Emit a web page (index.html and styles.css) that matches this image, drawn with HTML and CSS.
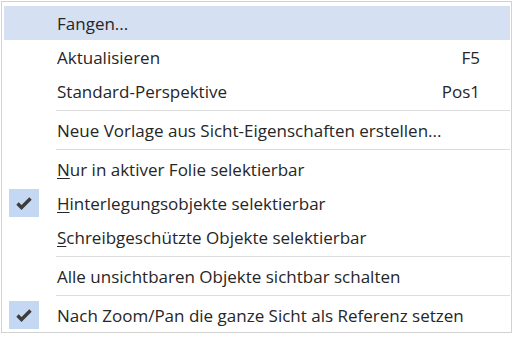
FILE: index.html
```html
<!DOCTYPE html>
<html>
<head>
    <title>Kontextmenü</title>
    <link rel="stylesheet" href="styles.css">
</head>
<body>
    <div class="menu">
        <div class="item hover"><span class="icon"></span><span class="label">Fangen...</span></div>
        <div class="item"><span class="icon"></span><span class="label">Aktualisieren</span><span class="key">F5</span></div>
        <div class="item"><span class="icon"></span><span class="label">Standard-Perspektive</span><span class="key">Pos1</span></div>
        <div class="sep"></div>
        <div class="item"><span class="icon"></span><span class="label">Neue Vorlage aus Sicht-Eigenschaften erstellen...</span></div>
        <div class="sep"></div>
        <div class="item"><span class="icon"></span><span class="label"><u>N</u>ur in aktiver Folie selektierbar</span></div>
        <div class="item"><span class="icon checked"><svg width="16" height="14" viewBox="0 0 16 14"><path d="M1.5 7.5 L5.5 11.5 L14.5 2.5" fill="none" stroke="#3c3c3c" stroke-width="3.4"/></svg></span><span class="label"><u>H</u>interlegungsobjekte selektierbar</span></div>
        <div class="item"><span class="icon"></span><span class="label"><u>S</u>chreibgeschützte Objekte selektierbar</span></div>
        <div class="sep"></div>
        <div class="item"><span class="icon"></span><span class="label">Alle unsichtbaren Objekte sichtbar schalten</span></div>
        <div class="sep"></div>
        <div class="item"><span class="icon checked"><svg width="16" height="14" viewBox="0 0 16 14"><path d="M1.5 7.5 L5.5 11.5 L14.5 2.5" fill="none" stroke="#3c3c3c" stroke-width="3.4"/></svg></span><span class="label">Nach Zoom/Pan die ganze Sicht als Referenz setzen</span></div>
    </div>
</body>
</html>
```

FILE: styles.css
```css
body {
    margin: 0;
    background-color: #ffffff;
    font-family: "Open Sans", "Noto Sans", sans-serif;
    font-size: 17px;
    color: #262626;
}

.menu {
    margin: 1px 0 0 1px;
    width: 506px;
    padding: 4px 1px 0 2px;
    border: 1px solid #d2d2d2;
    background-color: #ffffff;
}

.item {
    display: flex;
    align-items: center;
    height: 34px;
    padding-right: 30px;
}

.item.hover {
    background-color: #d5e0f2;
}

.icon {
    width: 30px;
    height: 28px;
    margin-left: 5px;
    margin-right: 18px;
    display: flex;
    align-items: center;
    justify-content: center;
}

.icon.checked {
    background-color: #c4d7f3;
}

.label {
    flex: 1;
    white-space: nowrap;
}

.label u {
    text-decoration-thickness: 1px;
    text-underline-offset: 2px;
}

.key {
    text-align: right;
}

.sep {
    height: 1px;
    margin: 2px 0 2px 52px;
    background-color: #dcdcdc;
}
```
